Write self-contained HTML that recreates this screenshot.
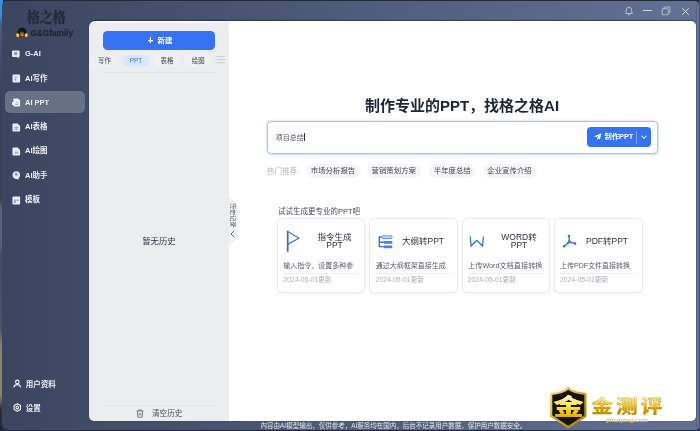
<!DOCTYPE html>
<html lang="zh-CN">
<head>
<meta charset="utf-8">
<title>格之格AI - AI PPT</title>
<style>
html,body{margin:0;padding:0;}
body{width:700px;height:431px;overflow:hidden;position:relative;background:#23283a;
  font-family:"Liberation Sans","Noto Sans CJK SC",sans-serif;-webkit-font-smoothing:antialiased;}
*{box-sizing:border-box;}
.abs{position:absolute;}
#deskL{left:0;top:0;width:3px;height:431px;background:linear-gradient(180deg,#3a8fd8 0,#3a8fd8 16px,#46618a 24px,#424c64 60px,#3a4257 100px,#3a4257 200px,#59627a 208px,#59627a 245px,#444b60 255px,#4d5468 330px,#8c8468 345px,#8c8468 395px,#2a2d3a 410px,#23283a 431px);}
#win{left:2px;top:1px;width:697px;height:429px;border-radius:5px 4px 4px 6px;
  background:linear-gradient(90deg,#3b455f 0%,#627295 100%);}
/* sidebar */
.logo1{left:26.8px;top:7.8px;font-family:"Liberation Serif","Noto Serif CJK SC",serif;font-weight:900;font-size:13.1px;line-height:20px;color:#242a3a;letter-spacing:-0.2px;-webkit-text-stroke:0.25px #242a3a;white-space:nowrap;}
.logo2{left:30.4px;top:27.6px;font-weight:700;font-size:8.2px;line-height:11px;color:#222838;white-space:nowrap;letter-spacing:0.05px;-webkit-text-stroke:0.3px #222838;}
.mi{left:4.5px;width:80.5px;height:22px;border-radius:5px;color:#eef1f6;font-size:7.5px;font-weight:700;line-height:22px;white-space:nowrap;}
.mi span{position:absolute;left:20.5px;top:0.4px;}
.mi svg{position:absolute;left:7.5px;top:7px;width:8.6px;height:9px;}
.mi.on{background:#667185;}
/* history panel */
#hist{left:89px;top:21.2px;width:140.2px;height:399.5px;background:linear-gradient(180deg,#fbfbfc 0,#fbfbfc 1.2px,#ebedef 2.2px);border-radius:6px 0 0 5px;}
#main{left:229.2px;top:21.2px;width:466.5px;height:399.5px;background:#fff;border-radius:0 5px 5px 0;}
.newbtn{left:103px;top:31px;width:112px;height:19px;border-radius:4.5px;background:#3672f5;color:#fff;font-size:7.4px;font-weight:700;line-height:17.4px;text-align:center;padding-left:2px;}
.tab{top:55px;height:12px;border-radius:6px;background:#f0f1f3;color:#3d4250;font-size:6.4px;line-height:12px;text-align:center;white-space:nowrap;}
.tab.on{background:#dbe6fb;color:#3b73ee;}
.hline{height:1px;background:#dfe2e6;}

/* main */
.title{left:229px;width:466px;top:95.4px;text-align:center;font-size:15px;font-weight:700;line-height:22px;color:#1e2534;white-space:nowrap;}
.inbox{left:267px;top:121px;width:391px;height:33px;border:1px solid #a9c1f6;border-radius:4.5px;background:#fff;box-shadow:0 0 0 1.2px rgba(70,125,245,.13),0 1px 3px rgba(70,125,245,.12);}
.intext{left:275.8px;top:132px;font-size:7px;line-height:11px;color:#50545e;white-space:nowrap;}
.mkbtn{left:587px;top:127px;width:64px;height:20px;border-radius:4px;background:#3672f5;}
.mkbtn span{position:absolute;left:17.5px;top:0.2px;line-height:20px;font-size:7.3px;font-weight:700;color:#fff;white-space:nowrap;}
.hot{left:266.8px;top:165.8px;font-size:7.6px;line-height:11px;color:#b3b7be;white-space:nowrap;}
.tag{top:164.2px;height:13.8px;border-radius:7px;background:#f6f6f8;color:#434853;font-size:7.4px;line-height:13.6px;text-align:center;white-space:nowrap;}
.sect{left:278px;top:206px;font-size:7.5px;line-height:11px;color:#454a55;white-space:nowrap;}
.card{top:218.3px;width:88.5px;height:74.3px;border:1px solid #e9eaed;border-radius:5.5px;background:#fff;box-shadow:0 1px 3px rgba(40,50,80,.08);}
.ct{font-size:8.5px;line-height:8.2px;color:#2b303b;text-align:center;white-space:nowrap;font-weight:400;}
.cd{font-size:7px;line-height:10px;color:#5b606b;white-space:nowrap;overflow:hidden;width:70px;}
.cl{height:1px;background:#eceef1;width:76px;}
.cdt{font-size:6.8px;line-height:9px;color:#a9adb5;white-space:nowrap;}
.foot{left:260.5px;top:421px;font-size:6.5px;line-height:9.5px;color:#e3e7ef;white-space:nowrap;}
</style>
</head>
<body><div id="root" style="position:absolute;left:0;top:0;width:700px;height:431px;will-change:transform">
<div class="abs" id="deskL"></div>
<div class="abs" id="win"></div>

<!-- sidebar -->
<div class="abs logo1">格之格</div>
<svg class="abs" style="left:16.400px;top:26.500px;width:12px;height:10.500px" viewBox="0 0 24 21">
  <path d="M2 20.500C1 9 5 .8 12 .8s11 8.200 10 19.700z" fill="#15161b"/>
  <ellipse cx="3.600" cy="16.300" rx="3.100" ry="4" fill="#f1d230" transform="rotate(-12 3.600 16.300)"/>
  <ellipse cx="20.400" cy="16.300" rx="3.100" ry="4" fill="#f1d230" transform="rotate(12 20.400 16.300)"/>
  <ellipse cx="12" cy="15.200" rx="4.600" ry="4.800" fill="#a84a1c"/>
  <ellipse cx="12" cy="16" rx="2.200" ry="2.400" fill="#e07a2a"/>
  <path d="M7.500 10.500h9" stroke="#8a8a8a" stroke-width="1.200" opacity=".6"/>
</svg>
<div class="abs logo2">G&amp;Gfamily</div>

<div class="abs mi" style="top:43px"><svg preserveAspectRatio="none" viewBox="0 0 18 18"><path d="M2 1h12a2 2 0 0 1 2 2v9a2 2 0 0 1-2 2h-1l3 3.5-6-3.5H2a2 2 0 0 1-2-2V3a2 2 0 0 1 2-2z" fill="#e9edf3"/><path d="M4 4h7v6H4z" fill="#97a1b4"/></svg><span>G-AI</span></div>
<div class="abs mi" style="top:67.3px"><svg preserveAspectRatio="none" viewBox="0 0 18 18"><rect x="1" y="1" width="16" height="16" rx="2.5" fill="#e9edf3"/><path d="M5 5h6v2H5zM5 9h4v4H5z" fill="#97a1b4"/></svg><span>AI写作</span></div>
<div class="abs mi on" style="top:91.3px"><svg preserveAspectRatio="none" viewBox="0 0 18 18"><path d="M5 1h8l4 4v10a2 2 0 0 1-2 2H5a2 2 0 0 1-2-2V3a2 2 0 0 1 2-2z" fill="#eef1f6"/><path d="M0 8h5v6H0z" fill="#eef1f6"/><path d="M7 9h6v1.6H7zM7 12.4h6V14H7z" fill="#8791a5"/></svg><span>AI PPT</span></div>
<div class="abs mi" style="top:115.7px"><svg preserveAspectRatio="none" viewBox="0 0 18 18"><path d="M3 1h9l5 5v9a2 2 0 0 1-2 2H3a2 2 0 0 1-2-2V3a2 2 0 0 1 2-2z" fill="#e9edf3"/><path d="M4.5 8h9v1.5h-9zM4.5 11.5h9V13h-9zM8 6h1.6v9H8z" fill="#97a1b4"/></svg><span>AI表格</span></div>
<div class="abs mi" style="top:140px"><svg preserveAspectRatio="none" viewBox="0 0 18 18"><path d="M3 1h9l5 5v9a2 2 0 0 1-2 2H3a2 2 0 0 1-2-2V3a2 2 0 0 1 2-2z" fill="#e9edf3"/><path d="M5 13l3-5 2.5 3 1.5-2 2 4z" fill="#97a1b4"/></svg><span>AI绘图</span></div>
<div class="abs mi" style="top:164.3px"><svg preserveAspectRatio="none" viewBox="0 0 18 18"><path d="M9 .5c4.5 0 8 3.300 8 7.500 0 2.500-1.300 4.700-3.200 6v3.500l-3.600-1.700c-.4.100-.800.100-1.200.100-4.500 0-8-3.400-8-7.900C1 3.800 4.500.5 9 .5z" fill="#e9edf3"/><path d="M5.500 6.500a3.500 3.500 0 0 1 7 0c0 2-2 2.500-3.500 4-1.500-1.500-3.500-2-3.500-4z" fill="#97a1b4"/></svg><span>AI助手</span></div>
<div class="abs mi" style="top:189px"><svg preserveAspectRatio="none" viewBox="0 0 18 18"><rect x="1" y="1" width="16" height="16" rx="2" fill="#e9edf3"/><path d="M4 7h4v7H4zM9.500 7H14v3H9.500z" fill="#97a1b4"/></svg><span>模板</span></div>

<div class="abs mi" style="top:373.600px"><svg preserveAspectRatio="none" viewBox="0 0 18 18" fill="none" stroke="#eef1f6" stroke-width="2.500" style="top:5.100px;left:8px"><circle cx="9" cy="5.800" r="3.600"/><path d="M1.800 16.800c.6-3.600 3.400-5.400 7.200-5.400s6.600 1.800 7.200 5.400"/></svg><span style="left:21.200px">用户资料</span></div>
<div class="abs mi" style="top:397.700px"><svg preserveAspectRatio="none" viewBox="0 0 18 18" fill="none" stroke="#eef1f6" stroke-width="2.300" stroke-linejoin="round" style="top:5.200px;left:8px"><path d="M9 1.300l6.700 3.850v7.700L9 16.700l-6.700-3.850v-7.700z"/><circle cx="9" cy="9" r="2.700"/></svg><span style="left:21.200px">设置</span></div>

<!-- history panel -->
<div class="abs" style="left:89px;top:21.200px;width:606.700px;height:399.500px;border-radius:6px 5px 5px 5px;box-shadow:0 -0.600px 1px rgba(25,32,52,.55)"></div>
<div class="abs" id="hist"></div>
<div class="abs" id="main"></div>
<div class="abs newbtn"><span style="font-size:10px;font-weight:700;position:relative;top:0.500px;margin-right:4.200px">+</span>新建</div>
<div class="abs tab" style="left:89px;width:29px;border-radius:0 6px 6px 0;background:#edeff1;text-align:left;padding-left:9px">写作</div>
<div class="abs tab on" style="left:122.500px;width:27px">PPT</div>
<div class="abs tab" style="left:153px;width:28px">表格</div>
<div class="abs tab" style="left:184px;width:28.500px">绘图</div>
<svg class="abs" style="left:216.300px;top:55.200px;width:10px;height:9px" viewBox="0 0 20 18" stroke="#c3c7ce" stroke-width="1.600"><path d="M1 3h18M1 9.200h18M1 15.500h18"/></svg>
<div class="abs hline" style="left:103.500px;top:71.500px;width:112px"></div>
<div class="abs" style="left:89px;width:140px;top:234.600px;text-align:center;font-size:8.400px;line-height:12px;color:#353a45">暂无历史</div>
<div class="abs hline" style="left:103.500px;top:405px;width:112px;background:#e2e4e8"></div>
<svg class="abs" style="left:136px;top:409px;width:8px;height:9px" viewBox="0 0 16 18" fill="none" stroke="#5a5f6a" stroke-width="1.500"><path d="M1 4h14M5.500 4V1.800h5V4M2.800 4l.8 12.500h8.800L13.200 4M6.300 8v5M9.700 8v5"/></svg>
<div class="abs" style="left:152px;top:408px;font-size:7.600px;line-height:11px;color:#4a4f5a;white-space:nowrap">清空历史</div>


<!-- main -->
<div class="abs title">制作专业的PPT，找格之格AI</div>
<div class="abs inbox"></div>
<div class="abs intext">项目总结<span style="display:inline-block;width:0.8px;height:8px;background:#333;vertical-align:-1px;margin-left:0.3px"></span></div>
<div class="abs mkbtn">
  <svg class="abs" style="left:7px;top:6.300px;width:7.600px;height:7.600px" viewBox="0 0 14 14"><path d="M13.5.5L.5 6l4.300 1.800L11 2.500 6 8.800v4.500l2.300-3.200 2.700 1.400z" fill="#fff"/></svg>
  <span>制作PPT</span>
  <div class="abs" style="left:49.400px;top:3.500px;width:0.800px;height:13px;background:#7da2f8"></div>
  <svg class="abs" style="left:54.300px;top:8.200px;width:6px;height:4px" viewBox="0 0 12 8" fill="none" stroke="#fff" stroke-width="2.100"><path d="M1 1.500l5 5 5-5"/></svg>
</div>
<div class="abs hot">热门推荐:</div>
<div class="abs tag" style="left:306px;width:54px">市场分析报告</div>
<div class="abs tag" style="left:367px;width:53.500px">营销策划方案</div>
<div class="abs tag" style="left:429px;width:46.500px">半年度总结</div>
<div class="abs tag" style="left:482.500px;width:54px">企业宣传介绍</div>

<div class="abs sect">试试生成更专业的PPT吧</div>

<div class="abs card" style="left:276.900px"></div>
<div class="abs card" style="left:369.300px"></div>
<div class="abs card" style="left:461.500px"></div>
<div class="abs card" style="left:554.100px"></div>

<!-- card 1 -->
<svg class="abs" style="left:285.500px;top:230px;width:15px;height:23px" viewBox="0 0 15 23" fill="none" stroke="#2d6cd9" stroke-linejoin="round"><path d="M1.700 .8v21" stroke-width="1.700"/><path d="M1.700 1.400l11.200 6.800L1.900 14.200" stroke-width="1.100"/></svg>
<div class="abs ct" style="left:304px;width:61px;top:233.100px">指令生成<br>PPT</div>
<div class="abs cd" style="left:283.300px;top:260.700px">输入指令，设置多种参</div>
<div class="abs cl" style="left:283.300px;top:273px"></div>
<div class="abs cdt" style="left:283.300px;top:275px">2024-05-01更新</div>
<!-- card 2 -->
<svg class="abs" style="left:377.500px;top:234.500px;width:15px;height:14px" viewBox="0 0 15 14" fill="none"><path d="M3.600 2H1.300v9.600h4M1.300 7.300h4" stroke="#3573dc" stroke-width="1.400"/><rect x="3.800" y=".9" width="10.200" height="2.500" rx=".6" fill="#dfeafc" stroke="#3f7de2" stroke-width=".9"/><rect x="5.400" y="5.900" width="8.900" height="2.800" rx=".7" fill="#4683e6"/><rect x="5.400" y="10.600" width="8.900" height="2.600" rx=".7" fill="#4683e6"/></svg>
<div class="abs ct" style="left:392px;width:62px;top:237.200px">大纲转PPT</div>
<div class="abs cd" style="left:375.700px;top:260.700px">通过大纲框架直接生成</div>
<div class="abs cl" style="left:375.700px;top:273px"></div>
<div class="abs cdt" style="left:375.700px;top:275px">2024-05-01更新</div>
<!-- card 3 -->
<svg class="abs" style="left:469px;top:234.500px;width:16px;height:13px" viewBox="0 0 16 13" fill="none" stroke="#2d6cd9" stroke-width="1.250" stroke-linejoin="miter"><path d="M1.200 1.500l.9 9.500 5.700-5.700 5.700 5.700.9-9.500"/></svg>
<div class="abs ct" style="left:488px;width:62px;top:233.100px">WORD转<br>PPT</div>
<div class="abs cd" style="left:468px;top:260.700px;width:76px;font-size:7.200px">上传Word文档直接转换</div>
<div class="abs cl" style="left:467.800px;top:273px"></div>
<div class="abs cdt" style="left:467.800px;top:275px">2024-05-01更新</div>
<!-- card 4 -->
<svg class="abs" style="left:562px;top:234px;width:16px;height:15px" viewBox="0 0 16 15" fill="none" stroke="#2d6cd9" stroke-width="1.100" stroke-linecap="round" stroke-linejoin="round"><path d="M6.900 1.600Q8.800 8.100 1.900 12.600Q7.550 6.550 13.400 9.500Q5.850 9.250 6.900 1.600z"/><circle cx="6.900" cy="1.900" r=".7" fill="#2d6cd9"/><circle cx="2.200" cy="12.300" r=".75" fill="#2d6cd9"/><circle cx="13.100" cy="9.500" r=".7" fill="#2d6cd9"/></svg>
<div class="abs ct" style="left:576px;width:62px;top:237.200px">PDF转PPT</div>
<div class="abs cd" style="left:560px;top:260.700px">上传PDF文件直接转换</div>
<div class="abs cl" style="left:560px;top:273px"></div>
<div class="abs cdt" style="left:560px;top:275px">2024-05-01更新</div>

<!-- history toggle -->
<svg class="abs" style="left:229px;top:197px;width:9px;height:49px" viewBox="0 0 9 49"><path d="M0 .5L6 5.500Q8.300 7 8.300 9.500V39.500Q8.300 42 6 43.500L0 48.500z" fill="#f3f4f6" stroke="#e4e6ea" stroke-width=".5"/></svg>
<div class="abs" style="left:229.600px;top:203.200px;width:7.500px;height:25px;writing-mode:vertical-rl;text-orientation:sideways;font-size:6.100px;line-height:7.500px;color:#4b505b;white-space:nowrap">历史记录</div>
<svg class="abs" style="left:230.300px;top:230.300px;width:5px;height:8px" viewBox="0 0 10 16" fill="none" stroke="#4b505b" stroke-width="1.700"><path d="M8.500 1.500L2 8l6.500 6.500"/></svg>

<div class="abs foot">内容由AI模型输出，仅供参考，AI服务均在国内，后台不记录用户数据，保护用户数据安全。</div>



<!-- title bar controls -->
<svg class="abs" style="left:624px;top:6px;width:10px;height:10px" viewBox="0 0 20 20" fill="none" stroke="#ccd3e0" stroke-width="1.600" stroke-linejoin="round"><path d="M10 2.500c-3.300 0-5.300 2.500-5.300 5.800v4L3 15h14l-1.700-2.700v-4c0-3.300-2-5.800-5.300-5.800zM8 17.500h4"/></svg>
<div class="abs" style="left:643px;top:9.600px;width:9px;height:0.900px;background:#d5dbe6"></div>
<svg class="abs" style="left:661px;top:5.500px;width:10px;height:10px" viewBox="0 0 20 20" fill="none" stroke="#ccd3e0" stroke-width="1.500"><rect x="2.500" y="5.500" width="12" height="12" rx="1"/><path d="M6 5.500V3a1 1 0 0 1 1-1h10a1 1 0 0 1 1 1v10a1 1 0 0 1-1 1h-2.500"/></svg>
<svg class="abs" style="left:681px;top:6.500px;width:9px;height:9px" viewBox="0 0 18 18" fill="none" stroke="#e4e8f0" stroke-width="1.700"><path d="M2.500 2.500l13 13M15.500 2.500l-13 13"/></svg>
<!-- window right/bottom edge shading -->
<div class="abs" style="left:696px;top:4px;width:1px;height:424px;background:rgba(60,75,110,.35)"></div>
<div class="abs" style="left:699px;top:0;width:1px;height:431px;background:#47485e"></div>

<!-- watermark -->
<svg class="abs" style="left:546px;top:383px;width:122px;height:48px" viewBox="0 0 122 48">
  <defs>
    <linearGradient id="gd" x1="0" y1="0" x2="0" y2="1"><stop offset="0" stop-color="#fff6b0"/><stop offset=".45" stop-color="#f0c020"/><stop offset=".55" stop-color="#d9a000"/><stop offset="1" stop-color="#b88400"/></linearGradient>
    <linearGradient id="gb" x1="0" y1="0" x2="1" y2="1"><stop offset="0" stop-color="#f7e27a"/><stop offset=".5" stop-color="#d8a820"/><stop offset="1" stop-color="#a87808"/></linearGradient>
    <linearGradient id="gk" x1="0" y1="0" x2="0" y2="1"><stop offset="0" stop-color="#fffde0"/><stop offset=".4" stop-color="#ffe75a"/><stop offset=".75" stop-color="#efbf10"/><stop offset="1" stop-color="#c99400"/></linearGradient>
  </defs>
  <path d="M22.300 4.900C20 8.200 12 10.600 5.200 10.900V33L22.300 44.200 39.400 33V10.900C32.600 10.600 24.600 8.200 22.300 4.900z" fill="#15130c" stroke="url(#gb)" stroke-width="2.200" stroke-linejoin="round"/>
  <text transform="translate(22.600 32.300) scale(1.300 .96)" x="0" y="0" text-anchor="middle" font-family="'Liberation Sans','Noto Sans CJK SC',sans-serif" font-weight="900" font-size="23.500" fill="url(#gk)">金</text>
  <g font-family="'Liberation Sans','Noto Sans CJK SC',sans-serif" font-weight="700" font-size="18.800" transform="translate(45.200 30.400) scale(1.150 .94)">
    <text x="0" y="0" fill="none" stroke="#fffef0" stroke-width="2" stroke-linejoin="round" letter-spacing="2.700" opacity=".95">金测评</text>
    <text x="0" y="0" fill="url(#gd)" stroke="#b98a10" stroke-width=".3" letter-spacing="2.700">金测评</text>
  </g>
  <text x="81.200" y="39.200" text-anchor="middle" font-family="'Liberation Sans',sans-serif" font-weight="700" font-size="6.200" fill="#eaa53a" stroke="#fff6e0" stroke-width=".15">jinceping.com</text>
</svg>

</div></body>
</html>
